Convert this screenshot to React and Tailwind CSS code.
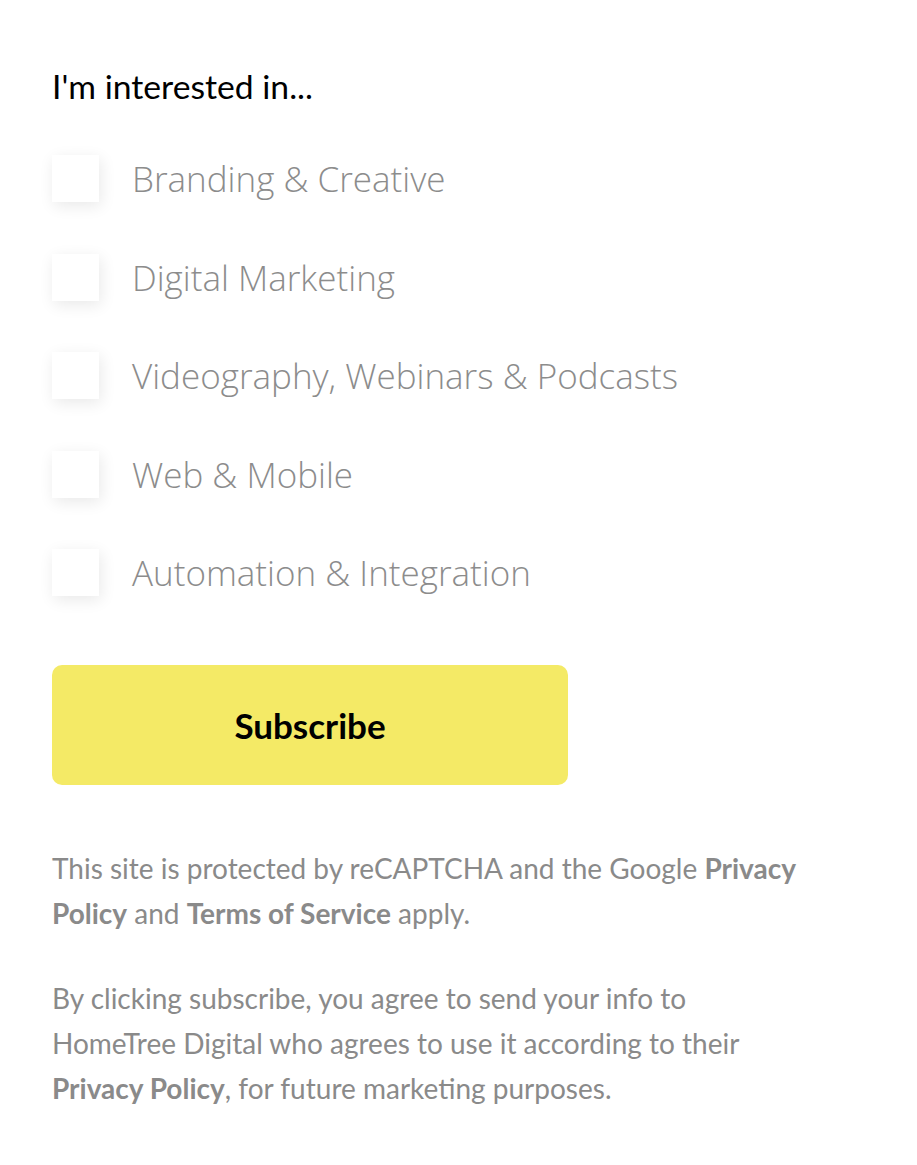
import React from "react";

const items = [
  "Branding & Creative",
  "Digital Marketing",
  "Videography, Webinars & Podcasts",
  "Web & Mobile",
  "Automation & Integration",
];

export default function App() {
  return (
    <div className="min-h-[1165px] bg-white px-[52px] pt-[66px] font-['Lato',sans-serif]">
      <div className="w-[756px]">
        <h2 className="text-[33.7px] leading-[40px] text-black">I'm interested in...</h2>
        <div className="mt-[49px] flex flex-col gap-[51.5px]">
          {items.map((t) => (
            <label key={t} className="flex items-center gap-[33px]">
              <span className="block h-[47px] w-[47px] shrink-0 bg-white shadow-[2px_4px_16px_rgba(0,0,0,0.09)]" />
              <span className="whitespace-nowrap font-['Open_Sans',sans-serif] text-[35px] font-light leading-[47px] text-[#8c8c8c]">
                {t}
              </span>
            </label>
          ))}
        </div>
        <button className="mt-[69px] flex h-[120px] w-[516px] items-center justify-center rounded-[10px] bg-[#f4ea66] text-[35px] font-bold text-black">
          Subscribe
        </button>
        <p className="mt-[61px] text-[28px] leading-[45px] text-[#8a8a8a]">
          This site is protected by reCAPTCHA and the Google <b>Privacy Policy</b> and <b>Terms of Service</b> apply.
        </p>
        <p className="mt-[40px] text-[28px] leading-[45px] text-[#8a8a8a]">
          By clicking subscribe, you agree to send your info to HomeTree Digital who agrees to use it according to their <b>Privacy Policy</b>, for future marketing purposes.
        </p>
      </div>
    </div>
  );
}
